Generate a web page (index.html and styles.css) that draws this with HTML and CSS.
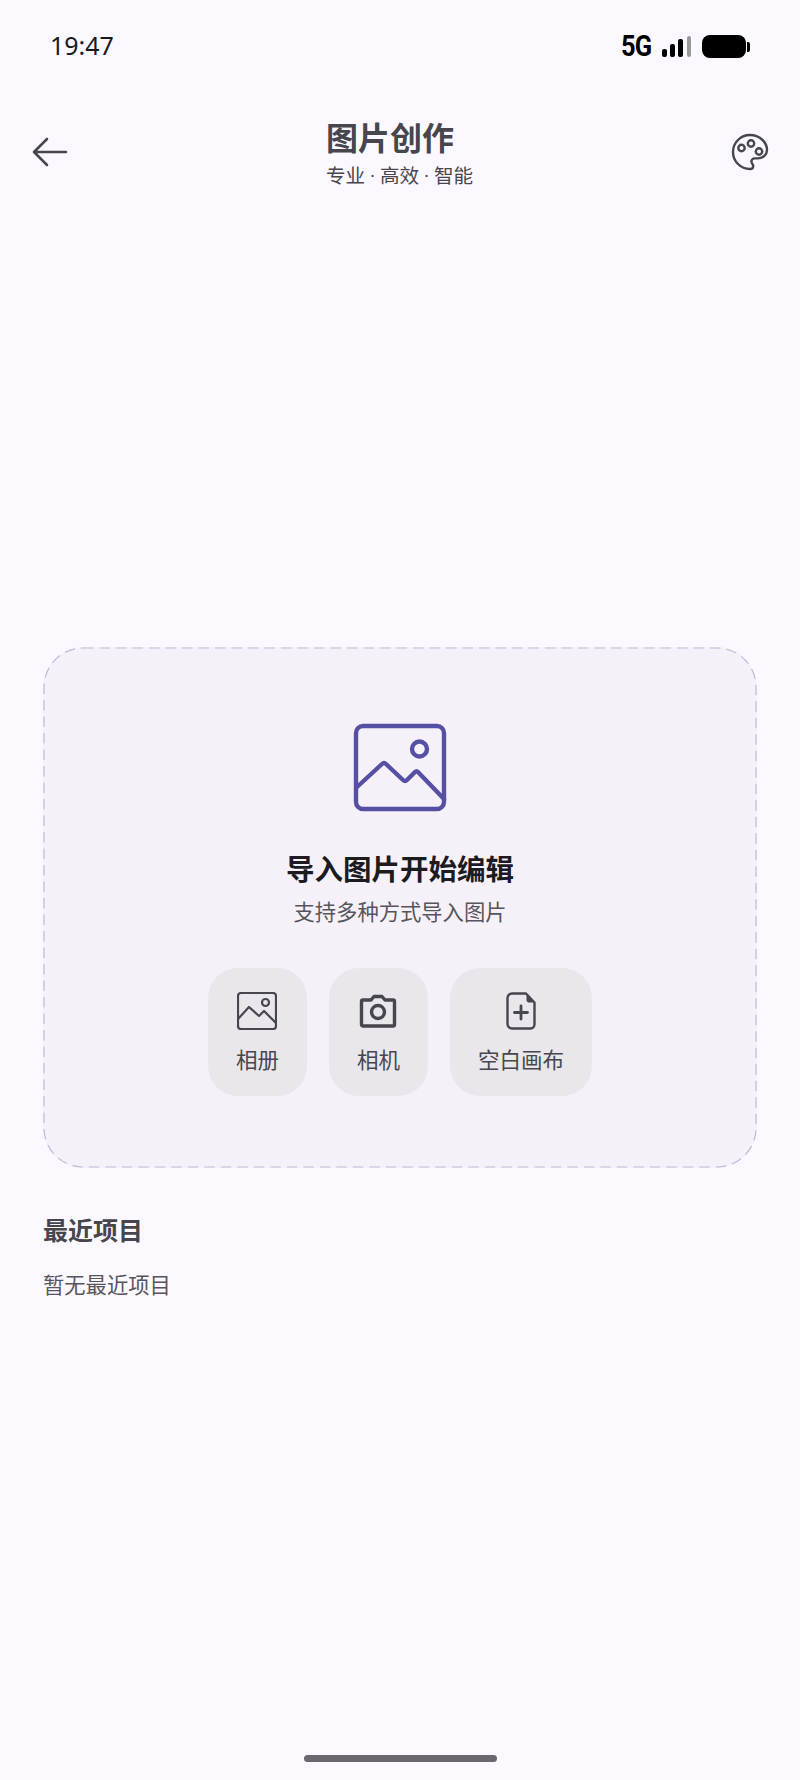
FILE: index.html
```html
<!DOCTYPE html>
<html lang="zh-CN">
<head>
    <meta charset="UTF-8">
    <meta name="viewport" content="width=device-width, initial-scale=1.0">
    <title>图片创作</title>
    <link rel="stylesheet" href="styles.css">
</head>
<body>
    <div class="page">
        <div class="status-bar">
            <span class="time">19:47</span>
            <div class="status-icons">
                <span class="net">5G</span>
                <div class="signal">
                    <span class="bar bar-1"></span>
                    <span class="bar bar-2"></span>
                    <span class="bar bar-3"></span>
                    <span class="bar bar-4"></span>
                </div>
                <div class="battery"></div>
            </div>
        </div>

        <div class="header">
            <svg class="back-icon" width="36" height="30" viewBox="0 0 36 30" fill="none" stroke="currentColor" stroke-width="2.6" stroke-linecap="round" stroke-linejoin="round">
                <path d="M15 2 2 15l13 13M2 15h32"/>
            </svg>
            <div class="title-block">
                <h1>图片创作</h1>
                <div class="subtitle">专业 · 高效 · 智能</div>
            </div>
            <svg class="palette-icon" width="38" height="38" viewBox="0 0 38 38" fill="none" stroke="currentColor" stroke-width="2.4" stroke-linejoin="round">
                <path d="M19 2C9.6 2 2 9.6 2 19s7.6 17 17 17c2 0 3.200-1.500 3.200-3.100 0-.9-.4-1.600-.9-2.200-.6-.7-.9-1.300-.9-2.100 0-1.800 1.500-3.200 3.300-3.200H27c5 0 9-3.800 9-8.400C36 9 28.400 2 19 2z"/>
                <circle cx="10.500" cy="15" r="3.200"/>
                <circle cx="20" cy="10.500" r="3.200"/>
                <circle cx="28" cy="18.500" r="3.200"/>
            </svg>
        </div>

        <div class="import-card">
            <svg class="card-border" fill="none">
                <rect class="card-border-line" x="1" y="1" rx="39"/>
            </svg>
            <svg class="hero-icon" width="96" height="92" viewBox="0 0 96 92" fill="none" stroke="currentColor" stroke-width="4.400" stroke-linecap="round" stroke-linejoin="round">
                <rect x="4" y="4" width="88" height="83" rx="7"/>
                <path d="M5 65 30 42q2-2 4 0l17 16q2 2 4 0l8-8q1.500-1.500 3 0l26 27"/>
                <circle cx="67.500" cy="27" r="7.500"/>
            </svg>
            <h2>导入图片开始编辑</h2>
            <p class="card-text">支持多种方式导入图片</p>
            <div class="actions">
                <div class="action">
                    <svg width="40" height="38" viewBox="0 0 40 38" fill="none" stroke="currentColor" stroke-width="2.200" stroke-linejoin="round">
                        <rect x="1" y="1" width="38" height="36" rx="3"/>
                        <path d="M1 27 12 15l10 9 5-5 12 12"/>
                        <circle cx="28.500" cy="10.500" r="3.500"/>
                    </svg>
                    <span>相册</span>
                </div>
                <div class="action">
                    <svg width="38" height="38" viewBox="0 0 38 38" fill="none" stroke="currentColor" stroke-width="3.400" stroke-linejoin="round">
                        <path d="M4 8h8l3-3.500h8L26 8h8c.8 0 1.500.7 1.500 1.500v23c0 .8-.7 1.500-1.500 1.500H4c-.8 0-1.500-.7-1.500-1.500v-23C2.500 8.700 3.200 8 4 8z"/>
                        <circle cx="19" cy="20" r="6.500"/>
                    </svg>
                    <span>相机</span>
                </div>
                <div class="action">
                    <svg width="30" height="38" viewBox="0 0 30 38" fill="none" stroke="currentColor" stroke-width="2.400" stroke-linejoin="round" stroke-linecap="round">
                        <path d="M6 1.500h14l8.500 9V32c0 2.500-1.500 4.500-4 4.500H6c-2.500 0-4.500-2-4.500-4.500V6c0-2.500 2-4.500 4.500-4.500z"/>
                        <path class="fold" d="M21 3v5c0 1.500.5 2 2 2h4z" stroke-width="1"/>
                        <path d="M15 14v13M8.500 20.500h13" stroke-width="2.800"/>
                    </svg>
                    <span>空白画布</span>
                </div>
            </div>
        </div>

        <div class="recent">
            <h3>最近项目</h3>
            <p>暂无最近项目</p>
        </div>

        <div class="home-bar"></div>
    </div>
</body>
</html>
```

FILE: styles.css
```css
:root {
    --page-bg: #fbf9ff;
    --ink: #48464d;
    --purple: #5650a4;
}
* {
    box-sizing: border-box;
}
body {
    margin: 0;
    background: var(--page-bg);
    color: var(--ink);
    font-family: "Noto Sans CJK SC", "Noto Sans", sans-serif;
}
.page {
    display: flex;
    flex-direction: column;
    height: 100vh;
    overflow: hidden;
}
.status-bar {
    display: flex;
    justify-content: space-between;
    align-items: center;
    height: 46px;
    margin-top: 23px;
    padding: 0 50px;
    color: #000;
}
.time {
    position: relative;
    top: -1px;
    font-family: "Noto Sans", sans-serif;
    font-size: 25px;
    color: #1a1a1c;
}
.status-icons {
    display: flex;
    align-items: center;
}
.net {
    font-family: Roboto, sans-serif;
    font-size: 29px;
    font-weight: 700;
    line-height: 24px;
    letter-spacing: -1px;
    width: 30px;
    transform: scaleX(0.88);
    transform-origin: left center;
}
.signal {
    display: flex;
    align-items: flex-end;
    gap: 3.6px;
    height: 21px;
    margin-left: 11px;
}
.bar {
    width: 4.500px;
    background: #000;
    border-radius: 2px;
}
.bar-1 { height: 8px; }
.bar-2 { height: 13px; }
.bar-3 { height: 18px; }
.bar-4 { height: 21px; background: #999; }
.battery {
    position: relative;
    width: 44px;
    height: 23px;
    margin-left: 11px;
    margin-right: 4px;
    background: #000;
    border-radius: 8px;
}
.battery::after {
    content: "";
    position: absolute;
    top: 7px;
    right: -4px;
    width: 3px;
    height: 10px;
    background: #000;
    border-radius: 0 2px 2px 0;
}
.header {
    display: flex;
    align-items: center;
    justify-content: space-between;
    margin-top: 45px;
    padding: 0 31px 0 32px;
    height: 76px;
}
.back-icon, .palette-icon {
    color: var(--ink);
}
h1 {
    margin: 0;
    font-size: 32px;
    line-height: 44px;
    font-weight: 700;
}
.subtitle {
    margin-top: 5px;
    font-family: Roboto, "Noto Sans CJK SC", sans-serif;
    font-size: 19.600px;
    line-height: 28px;
}
.import-card {
    position: relative;
    display: flex;
    flex-direction: column;
    align-items: center;
    height: 521px;
    margin: 457px 43px 0;
    padding-top: 75px;
    background: #f6f1f9;
    border-radius: 40px;
}
/* svg outline because a css dashed border can't set the dash length */
.card-border {
    position: absolute;
    top: 0;
    left: 0;
    width: 100%;
    height: 100%;
}
.card-border-line {
    width: calc(100% - 2px);
    height: calc(100% - 2px);
    stroke: #c0b9d8;
    stroke-width: 1.2;
    stroke-dasharray: 10.500 6;
}
.hero-icon {
    color: var(--purple);
}
h2 {
    margin: 34px 0 0;
    font-size: 28.500px;
    line-height: 40px;
    font-weight: 700;
    color: #1c1b1f;
}
.card-text {
    margin: 8px 0 0;
    font-size: 21.300px;
    line-height: 30px;
    color: #57555c;
}
.actions {
    display: flex;
    gap: 22px;
    margin-top: 42px;
}
.action {
    display: flex;
    flex-direction: column;
    align-items: center;
    height: 128px;
    padding: 24px 28px 0;
    background: #e9e7ec;
    border-radius: 30px;
}
.action svg {
    height: 38px;
}
.action span {
    margin-top: 14px;
    font-size: 21.500px;
    line-height: 30px;
}
.fold {
    fill: currentColor;
}
.recent {
    padding: 44px 43px 0;
}
h3 {
    margin: 0;
    font-size: 25px;
    line-height: 34px;
    font-weight: 700;
}
.recent p {
    margin: 23px 0 0;
    font-size: 21.300px;
    line-height: 30px;
    color: #57555c;
}
.home-bar {
    width: 193px;
    height: 7px;
    margin: auto auto 18px;
    background: #6a686e;
    border-radius: 4px;
}
```
